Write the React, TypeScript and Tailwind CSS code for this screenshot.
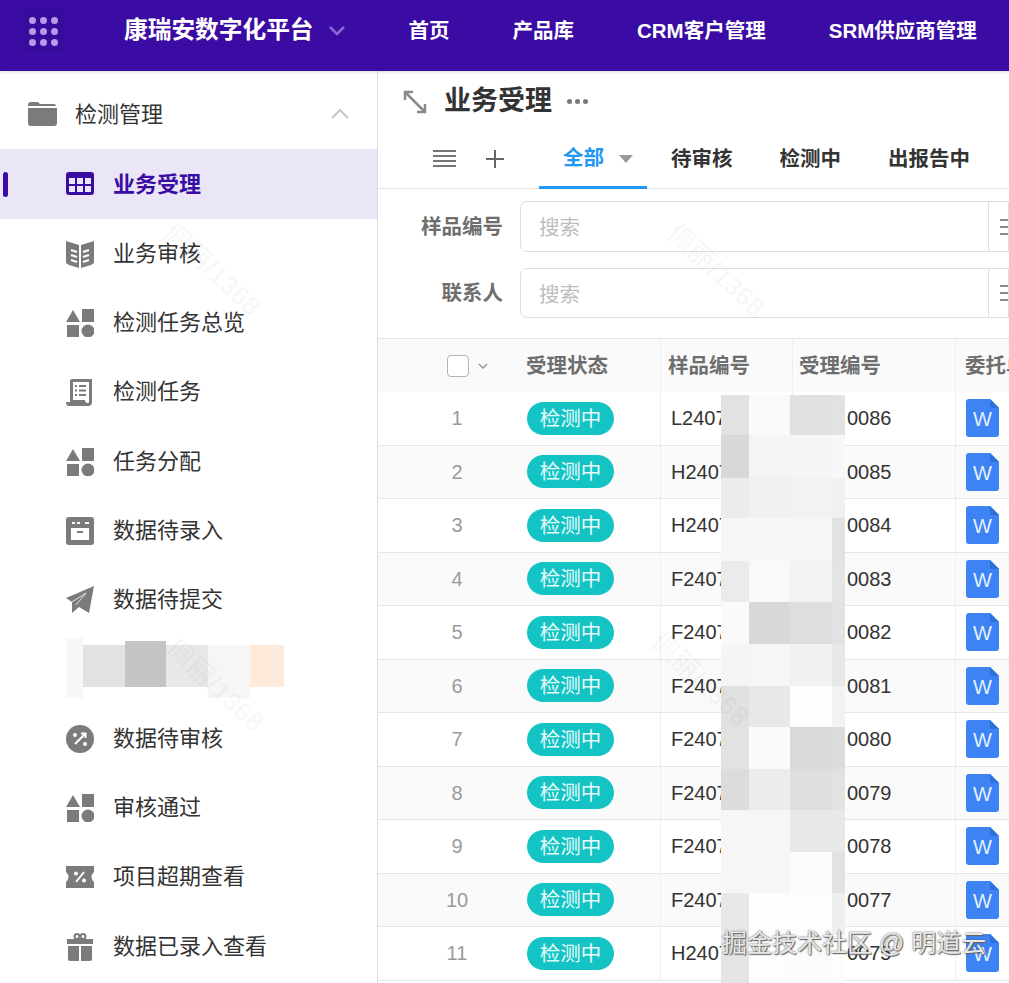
import React from "react";

const GRAY = "#7b7b7b";
const Svg = ({ w = 28, h = 28, children, className = "" }: { w?: number; h?: number; children: React.ReactNode; className?: string }) => (
  <svg width={w} height={h} viewBox={`0 0 ${w} ${h}`} className={`shrink-0 ${className}`}>{children}</svg>
);

const TableIcon = () => (
  <Svg h={24}><rect x="0" y="0" width="28" height="23" rx="3" fill="#3a0ca3" />
    {[3, 11, 19].map((x) => [6, 14].map((y) => <rect key={`${x}${y}`} x={x} y={y} width="6" height="6" fill="#ebe6f7" />))}
  </Svg>
);
const BookIcon = () => (
  <Svg>
    <path d="M0 1 L13 5 V28 L3 25 Q0 24 0 22 Z M28 1 L15 5 V28 L25 25 Q28 24 28 22 Z" fill={GRAY} />
    <path d="M5 10 L11 12 M5 15 L11 17 M5 20 L11 22 M23 10 L17 12 M23 15 L17 17 M23 20 L17 22" stroke="#fff" strokeWidth="2" />
  </Svg>
);
const ShapesIcon = () => (
  <Svg>
    <path d="M7 1 L14 13 H0 Z" fill={GRAY} />
    <rect x="16" y="0" width="12" height="13" fill={GRAY} />
    <rect x="1" y="16" width="12" height="12" fill={GRAY} />
    <circle cx="22" cy="22" r="6.5" fill={GRAY} />
  </Svg>
);
const ScriptIcon = () => (
  <Svg>
    <path d="M4 3 Q4 1 6 1 H26 V24 Q26 28 22 28 H3 Q0 28 0 24 H4 Z" fill={GRAY} />
    <path d="M7 4 H23 V24 Q23 25 21.500 25 Q19 25 19 22 H7 Z" fill="#fff" />
    <path d="M9 8 H11 M13 8 H20 M9 12.500 H11 M13 12.500 H20 M9 17 H11 M13 17 H20" stroke={GRAY} strokeWidth="2" />
  </Svg>
);
const WindowIcon = () => (
  <Svg>
    <rect width="28" height="28" rx="3" fill={GRAY} />
    <rect x="5" y="11" width="18" height="12" fill="#fff" />
    <rect x="6" y="5" width="3" height="2" fill="#fff" />
    <rect x="11" y="5" width="3" height="2" fill="#fff" />
    <rect x="19" y="5" width="4" height="2" fill="#fff" />
    <rect x="11" y="14" width="6" height="2" fill={GRAY} />
  </Svg>
);
const SendIcon = () => (
  <Svg>
    <path d="M28 0 L0 12 L6 16 L6 27 L13 21 L23 27 Z" fill={GRAY} />
    <path d="M6 16 L20 7 L10 19" stroke="#fff" strokeWidth="0.8" fill="none" />
  </Svg>
);
const PercentCircle = () => (
  <Svg>
    <circle cx="14" cy="14" r="14" fill={GRAY} />
    <path d="M9 19 L19 9 M15 8.500 H19.500 V13" stroke="#fff" strokeWidth="2" fill="none" />
    <circle cx="9" cy="10" r="2" fill="#fff" /><circle cx="19" cy="19" r="2" fill="#fff" />
  </Svg>
);
const TicketIcon = () => (
  <Svg h={22}>
    <path d="M0 0 H28 V6 Q23 11 28 16 V22 H0 V16 Q5 11 0 6 Z" fill={GRAY} />
    <path d="M10 16 L18 6" stroke="#fff" strokeWidth="2" />
    <circle cx="10" cy="7.500" r="2" fill="#fff" /><circle cx="18" cy="14.500" r="2" fill="#fff" />
  </Svg>
);
const GiftIcon = () => (
  <Svg>
    <circle cx="11" cy="3.500" r="2.500" fill="none" stroke={GRAY} strokeWidth="2" />
    <circle cx="17" cy="3.500" r="2.500" fill="none" stroke={GRAY} strokeWidth="2" />
    <rect x="1" y="6" width="26" height="5" fill={GRAY} />
    <path d="M2 13 H13 V28 H4 Q2 28 2 26 Z M15 13 H26 V26 Q26 28 24 28 H15 Z" fill={GRAY} />
  </Svg>
);
const WordIcon = () => (
  <svg width="33" height="38" viewBox="0 0 33 38" className="shrink-0">
    <path d="M3 0 H24 L33 9 V35 Q33 38 30 38 H3 Q0 38 0 35 V3 Q0 0 3 0 Z" fill="#3d83f3" />
    <path d="M24 0 L33 9 H26 Q24 9 24 7 Z" fill="#2f6fd8" />
    <text x="16.500" y="27" textAnchor="middle" fontSize="20" fill="#e4f1ff" fontFamily="Liberation Sans">W</text>
  </svg>
);

const menu: [string, React.ReactNode][] = [
  ["业务审核", <BookIcon />],
  ["检测任务总览", <ShapesIcon />],
  ["检测任务", <ScriptIcon />],
  ["任务分配", <ShapesIcon />],
  ["数据待录入", <WindowIcon />],
  ["数据待提交", <SendIcon />],
  ["", null],
  ["数据待审核", <PercentCircle />],
  ["审核通过", <ShapesIcon />],
  ["项目超期查看", <TicketIcon />],
  ["数据已录入查看", <GiftIcon />],
];

const rows: [number, string, string][] = [
  [1, "L2407", "0086"], [2, "H2407", "0085"], [3, "H2407", "0084"], [4, "F2407", "0083"],
  [5, "F2407", "0082"], [6, "F2407", "0081"], [7, "F2407", "0080"], [8, "F2407", "0079"],
  [9, "F2407", "0078"], [10, "F2407", "0077"], [11, "H2407", "0075"],
];

const mosaic: [number, string[]][] = [
  [40, ["bg-[#e2e2e2]", "bg-[#fafafa]", "bg-[#e0e0e0]", "bg-[#e2e2e2]"]],
  [43, ["bg-[#d8d8d8]", "bg-[#f4f4f4]", "bg-[#f5f5f5]", "bg-[#f8f8f8]"]],
  [40, ["bg-[#ececec]", "bg-[#f1f1f1]", "bg-[#f2f2f2]", "bg-[#f0f0f0]"]],
  [43, ["bg-[#f6f6f6]", "bg-[#f7f7f7]", "bg-[#f6f6f6]", "bg-[#e2e2e2]"]],
  [41, ["bg-[#ebebeb]", "bg-[#f9f9f9]", "bg-[#f2f2f2]", "bg-[#e4e4e4]"]],
  [42, ["bg-[#fafafa]", "bg-[#d8d8d8]", "bg-[#dedede]", "bg-[#e2e2e2]"]],
  [42, ["bg-[#f5f5f5]", "bg-[#f6f6f6]", "bg-[#f1f1f1]", "bg-[#e8e8e8]"]],
  [41, ["bg-[#e0e0e0]", "bg-[#e8e8e8]", "bg-[#fdfdfd]", "bg-[#f2f2f2]"]],
  [42, ["bg-[#e2e2e2]", "bg-[#fafafa]", "bg-[#d9d9d9]", "bg-[#dcdcdc]"]],
  [41, ["bg-[#dcdcdc]", "bg-[#ececec]", "bg-[#dfdfdf]", "bg-[#e2e2e2]"]],
  [42, ["bg-[#f6f6f6]", "bg-[#f6f6f6]", "bg-[#e8e8e8]", "bg-[#e8e8e8]"]],
  [41, ["bg-[#f6f6f6]", "bg-[#f6f6f6]", "bg-[#fbfbfb]", "bg-[#e2e2e2]"]],
  [42, ["bg-[#e8e8e8]", "bg-[#fdfdfd]", "bg-[#fdfdfd]", "bg-[#efefef]"]],
  [48, ["bg-[#e4e4e4]", "bg-[#fdfdfd]", "bg-[#fbfbfb]", "bg-[#fdfdfd]"]],
];
const mosaicW = ["w-[28px]", "w-[41px]", "w-[42px]", "w-[13px]"];

const Watermark = ({ className }: { className: string }) => (
  <div className={`absolute text-[27px] font-bold text-black/[0.03] -translate-x-1/2 -translate-y-1/2 rotate-[43deg] whitespace-nowrap pointer-events-none ${className}`}>佩丽/1368</div>
);

const Filter = ({ label, className }: { label: string; className: string }) => (
  <div className={`flex items-center ${className}`}>
    <div className="w-[125px] pt-[1px] text-right text-[20.500px] font-bold text-[#6e6e6e] leading-none">{label}</div>
    <div className="ml-[17px] flex-1 h-full border border-[#dedede] rounded-l-[7px] flex items-center">
      <span className="ml-[18px] pt-[4px] text-[20.500px] text-[#bdbdbd] flex-1">搜索</span>
      <div className="w-[20px] h-full border-l border-[#dedede] flex flex-col justify-center gap-[5px] pl-[11px]">
        {[0, 1, 2].map((i) => <div key={i} className="h-[2px] w-full bg-[#8a8a8a]" />)}
      </div>
    </div>
  </div>
);

export default function App() {
  return (
    <div className="relative w-[1009px] h-[983px] overflow-hidden bg-white font-['Liberation_Sans','Noto_Sans_CJK_SC',sans-serif] text-[#333]">
      <header className="h-[71px] bg-[#3a0ca3] flex items-center pb-[9px] text-white font-bold relative z-10 shadow-[0_1px_3px_rgba(0,0,0,0.15)]">
        <div className="ml-[22px] w-[42px] h-[42px] bg-[#370b9b] grid grid-cols-3 gap-x-[3px] gap-y-[3px] p-[6px] place-items-center">
          {Array.from({ length: 9 }).map((_, i) => <span key={i} className="w-[7px] h-[7px] rounded-full bg-[#b99ae8]" />)}
        </div>
        <div className="ml-[60px] text-[23.700px]">康瑞安数字化平台</div>
        <svg width="16" height="10" viewBox="0 0 16 10" className="ml-[15px]"><path d="M1 1 L8 8 L15 1" stroke="#8a68d4" strokeWidth="2.500" fill="none" /></svg>
        <div className="ml-[64px] text-[20.500px]">首页</div>
        <div className="ml-[63px] text-[20.500px]">产品库</div>
        <div className="ml-[63px] text-[20.500px]">CRM客户管理</div>
        <div className="ml-[63px] text-[20.500px] whitespace-nowrap">SRM供应商管理</div>
      </header>
      <div className="flex h-[912px]">
        <aside className="w-[378px] shrink-0 border-r border-[#dcdcdc] relative">
          <div className="h-[78px] flex items-center pl-[28px] pt-[8px]">
            <svg width="29" height="24" viewBox="0 0 29 24" className="shrink-0"><path d="M0 3 Q0 0 3 0 H10 L12 2 H26 Q28 2 28 4 H0 Z M0 6 H29 V21 Q29 24 26 24 H3 Q0 24 0 21 Z" fill={GRAY} /></svg>
            <span className="ml-[18px] pt-[1px] text-[22px] leading-none">检测管理</span>
            <svg width="18" height="10" viewBox="0 0 18 10" className="ml-[168px]"><path d="M1 9 L9 1 L17 9" stroke="#c4c4c4" strokeWidth="2" fill="none" /></svg>
          </div>
          <div className="relative h-[70px] bg-[#ebe6f7] flex items-center pl-[66px]">
            <div className="absolute left-[3px] top-[23px] w-[5px] h-[25px] rounded bg-[#3a0ca3]" />
            <TableIcon />
            <span className="ml-[19px] pt-[2px] text-[22px] font-bold text-[#3a0ca3] leading-none">业务受理</span>
          </div>
          {menu.map(([t, ic], i) => (
            <div key={i} className="h-[69.300px] flex items-center pl-[66px]">
              {t ? (<>{ic}<span className="ml-[19px] text-[22px] leading-none whitespace-nowrap">{t}</span></>) : (
                <div className="flex items-start h-[60px] -mt-[2px]">
                  <div className="w-[17px] h-[60px] bg-[#f7f7f7]" />
                  <div className="w-[42px] h-[42px] mt-[7px] bg-[#e2e2e2]" />
                  <div className="w-[41px] h-[46px] mt-[3px] bg-[#c4c4c4]" />
                  <div className="w-[42px] h-[42px] mt-[7px] bg-[#e8e8e8]" />
                  <div className="w-[42px] h-[53px] mt-[7px] bg-[#f6f6f6]" />
                  <div className="w-[34px] h-[42px] mt-[7px] bg-[#fdeadb]" />
                </div>
              )}
            </div>
          ))}
        </aside>
        <main className="flex-1 min-w-0">
          <div className="h-[59px] flex items-center pl-[25px] pt-[2px]">
            <svg width="24" height="24" viewBox="0 0 24 24" className="shrink-0"><path d="M3 3 L21 21 M2 10 V2 H10 M22 14 V22 H14" stroke="#8a8a8a" strokeWidth="2.500" fill="none" /></svg>
            <span className="ml-[17px] text-[27px] font-bold leading-none">业务受理</span>
            <div className="ml-[15px] flex gap-[3px]">{[0, 1, 2].map((i) => <span key={i} className="w-[5px] h-[5px] rounded-full bg-[#777]" />)}</div>
          </div>
          <div className="h-[59px] border-b border-[#e3e3e3] flex items-center relative">
            <div className="ml-[55px] w-[23px] flex flex-col gap-[2.500px] -mt-[1px]">{[0, 1, 2, 3].map((i) => <div key={i} className="h-[2.500px] bg-[#777]" />)}</div>
            <svg width="20" height="20" viewBox="0 0 20 20" className="ml-[29px]"><path d="M10 1 V19 M1 10 H19" stroke="#666" strokeWidth="2" /></svg>
            <div className="ml-[34px] w-[108px] h-full flex items-center pl-[24px] border-b-[3px] border-[#2196f3] translate-y-[1px]">
              <span className="text-[20.500px] font-bold text-[#2196f3] leading-none">全部</span>
              <svg width="14" height="8" viewBox="0 0 14 8" className="ml-[15px]"><path d="M0 0 H14 L7 8 Z" fill="#999" /></svg>
            </div>
            <span className="ml-[24px] text-[20.500px] font-bold leading-none">待审核</span>
            <span className="ml-[47px] text-[20.500px] font-bold leading-none">检测中</span>
            <span className="ml-[47px] text-[20.500px] font-bold leading-none whitespace-nowrap">出报告中</span>
          </div>
          <div className="pt-[12px] h-[150px] border-b border-[#e3e3e3]">
            <Filter label="样品编号" className="h-[51px]" />
            <Filter label="联系人" className="h-[50px] mt-[16px]" />
          </div>
          <div className="h-[53px] bg-[#fafafa] flex items-center text-[20.500px] font-bold text-[#6e6e6e]">
            <div className="w-[134px] h-full flex items-center pl-[69px]">
              <div className="w-[22px] h-[22px] rounded-[4px] border border-[#b5b5b5] bg-white" />
              <svg width="10" height="6" viewBox="0 0 10 6" className="ml-[9px]"><path d="M1 1 L5 5 L9 1" stroke="#999" strokeWidth="1.500" fill="none" /></svg>
            </div>
            <div className="w-[149px] h-full flex items-center pl-[14px] pt-[2px] border-r border-[#eeeeee]">受理状态</div>
            <div className="w-[132px] h-full flex items-center pl-[7px] pt-[2px] border-r border-[#eeeeee]">样品编号</div>
            <div className="w-[163px] h-full flex items-center pl-[6px] pt-[2px] border-r border-[#eeeeee]">受理编号</div>
            <div className="flex-1 h-full flex items-center pl-[9px] pt-[2px] whitespace-nowrap overflow-hidden">委托单</div>
          </div>
          {rows.map(([n, a, b], i) => (
            <div key={n} className={`h-[53.500px] flex items-center border-b border-[#e6e6e6] text-[20px] ${i % 2 ? "bg-[#fafafa]" : "bg-white"}`}>
              <div className="w-[134px] h-full pl-[39px] pr-[15px] flex items-center justify-center text-[#9a9a9a]">{n}</div>
              <div className="w-[149px] h-full flex items-center pl-[15px] border-r border-[#eeeeee]">
                <span className="w-[87px] h-[33px] pt-[1px] rounded-full bg-[#14c4c4] text-[20.500px] text-[#e8fbfb] flex items-center justify-center leading-none">检测中</span>
              </div>
              <div className="w-[132px] h-full flex items-center pl-[10px] border-r border-[#eeeeee]">{a}</div>
              <div className="w-[163px] h-full flex items-center pl-[54px] border-r border-[#eeeeee]">{b}</div>
              <div className="flex-1 h-full flex items-center pl-[10px]"><WordIcon /></div>
            </div>
          ))}
        </main>
      </div>

      <div className="absolute left-[721px] top-[395px] flex flex-col">
        {mosaic.map(([h, cells], r) => (
          <div key={r} className="flex" style={{ height: h }}>
            {cells.map((c, j) => <div key={j} className={`${mosaicW[j]} ${c}`} />)}
          </div>
        ))}
      </div>

      <Watermark className="left-[212px] top-[270px]" />
      <Watermark className="left-[716px] top-[271px]" />
      <Watermark className="left-[215px] top-[686px]" />
      <Watermark className="left-[700px] top-[680px]" />

      <div className="absolute left-[722px] top-[926px] text-[25px] leading-[34px] text-[#e8e8e8] whitespace-nowrap [text-shadow:0_0_2px_#555,1px_1px_1px_#666]">掘金技术社区 @ 明道云</div>
    </div>
  );
}
